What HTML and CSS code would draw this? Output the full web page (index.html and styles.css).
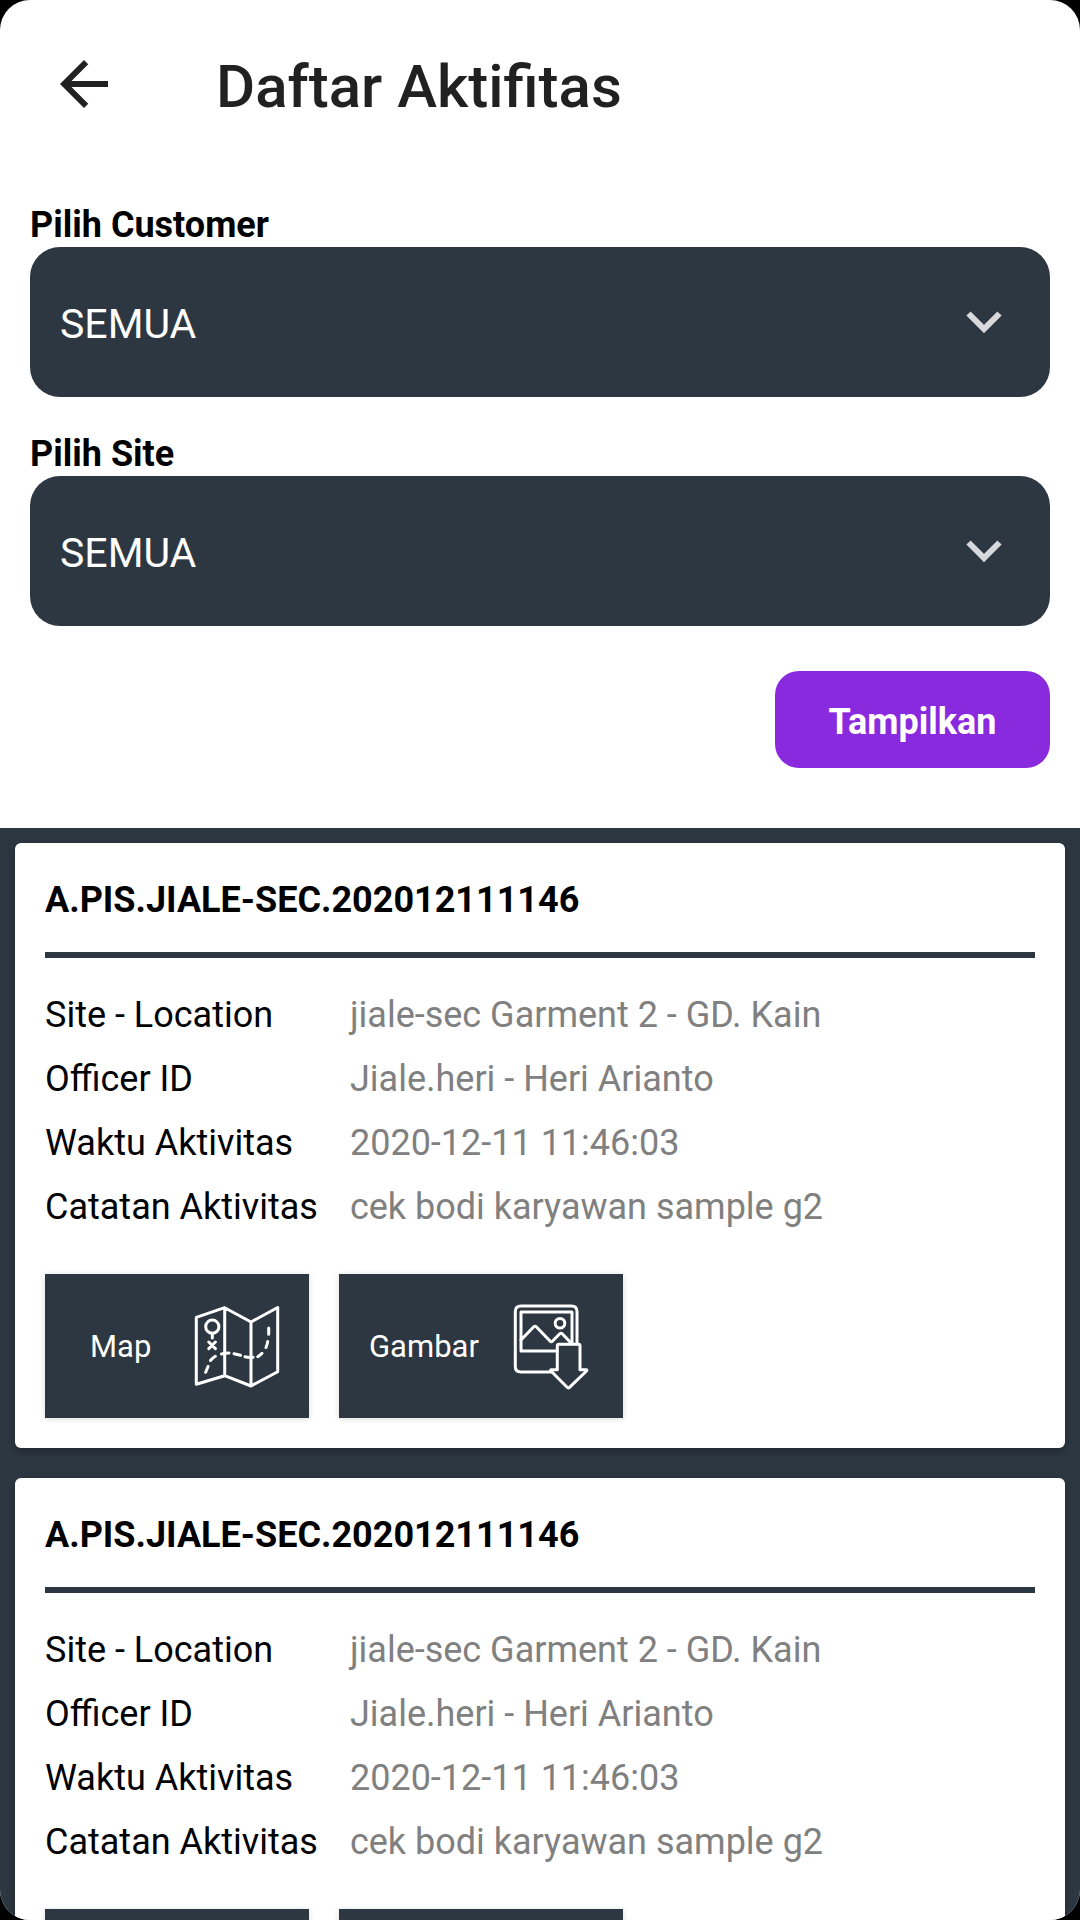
FILE: index.html
```html
<!DOCTYPE html>
<html lang="id">
<head>
<meta charset="utf-8">
<meta name="viewport" content="width=device-width, initial-scale=1">
<title>Daftar Aktifitas</title>
<link rel="stylesheet" href="styles.css">
</head>
<body>
<svg class="sprite" aria-hidden="true">
  <symbol id="icon-map" viewBox="0 0 90 90">
    <g fill="none" stroke="currentColor" stroke-width="3" stroke-linecap="round" stroke-linejoin="round">
      <path d="M4.3 15.3 32.7 5.7 59 20 85.7 5.5V69.7L59 84 32.7 73.7 4.3 82.3ZM32.7 5.7v68M59 20v64"/>
      <circle cx="20.3" cy="24.7" r="6.6"/>
      <path d="M20.3 31.5v4.5M16.8 40l6.6 6.6M23.4 40l-6.6 6.6"/>
      <path d="M13.7 70.3 16 64.5M18.5 58.5Q20.5 56 23.3 54.3M29.5 52Q33 51 37 51M42 51.7 48.5 53.3M53 54.8Q57 56 61 55.3M65.8 54.8Q68 53.5 70 51.3M74 45.5Q75.5 42 75.7 39.5M76.7 32.3V26"/>
    </g>
  </symbol>
  <symbol id="icon-image" viewBox="0 0 90 90">
    <g fill="none" stroke="currentColor" stroke-width="3" stroke-linecap="round" stroke-linejoin="round">
      <path d="M45 70H15Q9.300 70 9.300 64.500V9.500Q9.300 4 15 4H65.500Q71 4 71 9.500V42"/>
      <path d="M66 41V10H15V49H51"/>
      <path d="M15 38 27.500 25Q29 23.500 30.500 25L44 39Q45.300 40.500 46.600 39L53.500 32Q55 30.500 56.500 32L65.500 41.500"/>
      <circle cx="54" cy="21.300" r="4.800"/>
      <path d="M53 42.300H72.500Q74 42.300 74 44V67.700H80Q81.500 67.700 80.500 69L63.500 85.300Q62.300 86.500 61.100 85.300L45 69Q44 67.700 45.500 67.700H51.300V44Q51.300 42.300 53 42.300Z"/>
    </g>
  </symbol>
  <symbol id="icon-chevron" viewBox="0 0 36 24">
    <path d="M2.500 3.500 18 19 33.500 3.500" fill="none" stroke="currentColor" stroke-width="6"/>
  </symbol>
</svg>
<div class="app">
  <header class="app-bar">
    <button class="back" type="button" aria-label="Kembali">
      <svg viewBox="0 0 24 24" aria-hidden="true"><path fill="currentColor" d="M20 11H7.830l5.590-5.590L12 4l-8 8 8 8 1.410-1.410L7.830 13H20v-2z"/></svg>
    </button>
    <h1 class="title">Daftar Aktifitas</h1>
  </header>

  <form class="filters">
    <div class="field">
      <label class="field-label" for="customer">Pilih Customer</label>
      <div class="picker">
        <select class="select" id="customer"><option>SEMUA</option></select>
        <svg class="chevron" aria-hidden="true"><use href="#icon-chevron"/></svg>
      </div>
    </div>
    <div class="field">
      <label class="field-label" for="site">Pilih Site</label>
      <div class="picker">
        <select class="select" id="site"><option>SEMUA</option></select>
        <svg class="chevron" aria-hidden="true"><use href="#icon-chevron"/></svg>
      </div>
    </div>
    <button class="submit" type="button">Tampilkan</button>
  </form>

  <main class="list">
    <article class="card">
      <h2 class="card-title">A.PIS.JIALE-SEC.202012111146</h2>
      <dl class="details">
        <dt>Site - Location</dt><dd>jiale-sec Garment 2 - GD. Kain</dd>
        <dt>Officer ID</dt><dd>Jiale.heri - Heri Arianto</dd>
        <dt>Waktu Aktivitas</dt><dd>2020-12-11 11:46:03</dd>
        <dt>Catatan Aktivitas</dt><dd>cek bodi karyawan sample g2</dd>
      </dl>
      <div class="actions">
        <button class="action action-map" type="button">Map<svg class="action-icon" aria-hidden="true"><use href="#icon-map"/></svg></button>
        <button class="action action-image" type="button">Gambar<svg class="action-icon" aria-hidden="true"><use href="#icon-image"/></svg></button>
      </div>
    </article>
    <article class="card">
      <h2 class="card-title">A.PIS.JIALE-SEC.202012111146</h2>
      <dl class="details">
        <dt>Site - Location</dt><dd>jiale-sec Garment 2 - GD. Kain</dd>
        <dt>Officer ID</dt><dd>Jiale.heri - Heri Arianto</dd>
        <dt>Waktu Aktivitas</dt><dd>2020-12-11 11:46:03</dd>
        <dt>Catatan Aktivitas</dt><dd>cek bodi karyawan sample g2</dd>
      </dl>
      <div class="actions">
        <button class="action action-map" type="button">Map<svg class="action-icon" aria-hidden="true"><use href="#icon-map"/></svg></button>
        <button class="action action-image" type="button">Gambar<svg class="action-icon" aria-hidden="true"><use href="#icon-image"/></svg></button>
      </div>
    </article>
  </main>
</div>
</body>
</html>
```
FILE: styles.css
```css
:root {
  --slate: #2d3741;
  --purple: #8a2adf;
}

* {
  box-sizing: border-box;
}

body {
  margin: 0;
  background: #000;
  color: #000;
  font-family: Roboto, "Noto Sans", sans-serif;
  font-size: 36px;
  line-height: 44px;
}

h1,
h2,
dl,
dd {
  margin: 0;
}

button,
select {
  margin: 0;
  border: 0;
  font: inherit;
}

.sprite {
  position: absolute;
  width: 0;
  height: 0;
}

.app {
  display: flex;
  flex-direction: column;
  height: 100vh;
  overflow: hidden;
  border-radius: 30px;
  background: #fff;
}

.app-bar {
  display: flex;
  flex: none;
  align-items: center;
  gap: 96px;
  height: 168px;
  padding: 0 48px;
  color: #212121;
}

.back {
  width: 72px;
  height: 72px;
  padding: 0;
  background: none;
  color: inherit;
}

.back svg {
  display: block;
}

.title {
  padding-top: 6px;
  font-size: 60px;
  font-weight: 500;
  line-height: 70px;
}

.filters {
  display: flex;
  flex: none;
  flex-direction: column;
  gap: 35px;
  padding: 35px 30px 60px;
}

.field {
  display: flex;
  flex-direction: column;
}

.field-label {
  font-weight: 700;
}

.picker {
  display: grid;
  align-items: center;
}

.select,
.chevron {
  grid-area: 1 / 1;
}

.select {
  width: 100%;
  height: 150px;
  padding: 4px 90px 0 30px;
  border-radius: 30px;
  appearance: none;
  background: var(--slate);
  color: #fff;
  font-size: 41px;
}

.chevron {
  justify-self: end;
  width: 36px;
  height: 24px;
  margin-right: 48px;
  color: #d8d9dd;
  pointer-events: none;
}

.submit {
  align-self: flex-end;
  width: 275px;
  height: 97px;
  margin-top: 10px;
  padding: 4px 0 0;
  border-radius: 24px;
  background: var(--purple);
  color: #fff;
  font-weight: 700;
}

.list {
  display: flex;
  flex: 1;
  flex-direction: column;
  gap: 30px;
  min-height: 0;
  padding: 15px;
  overflow-y: auto;
  background: var(--slate);
  scrollbar-width: none;
}

.card {
  flex: none;
  padding: 35px 30px 30px;
  border-radius: 6px;
  background: #fff;
  box-shadow: 0 3px 8px rgba(0, 0, 0, 0.3);
}

.card-title {
  padding-bottom: 30px;
  border-bottom: 6px solid var(--slate);
  font-size: 36px;
  font-weight: 700;
}

.details {
  display: grid;
  grid-template-columns: max-content 1fr;
  column-gap: 32px;
  padding: 25px 0 35px;
  line-height: 64px;
}

.details dd {
  color: #808080;
}

.actions {
  display: flex;
  gap: 30px;
}

.action {
  display: flex;
  align-items: center;
  justify-content: space-between;
  height: 144px;
  background: var(--slate);
  color: #fff;
  font-size: 31px;
  line-height: 40px;
  box-shadow: 0 1px 6px rgba(0, 0, 0, 0.15);
}

.action-map {
  width: 264px;
  padding: 2px 27px 0 45px;
}

.action-image {
  width: 284px;
  padding: 2px 27px 0 30px;
}

.action-icon {
  width: 90px;
  height: 90px;
}
```
